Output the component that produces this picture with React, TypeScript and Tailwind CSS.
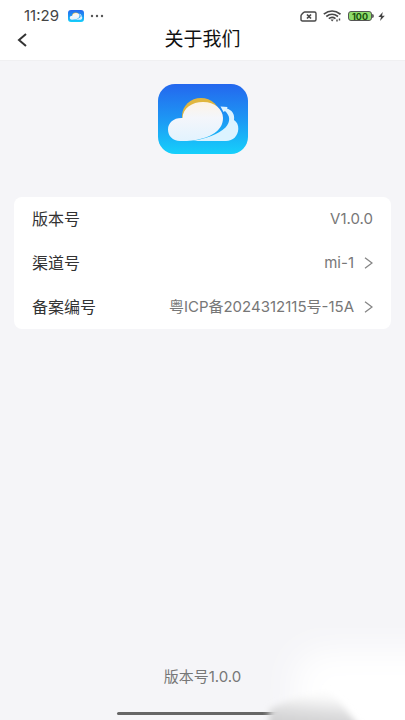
import { useId } from 'react';

interface AboutItem {
  label: string;
  value: string;
  link?: boolean;
}

const items: AboutItem[] = [
  { label: '版本号', value: 'V1.0.0' },
  { label: '渠道号', value: 'mi-1', link: true },
  { label: '备案编号', value: '粤ICP备2024312115号-15A', link: true },
];

function CloudLogo({ className }: { className: string }) {
  const id = useId();

  return (
    <svg viewBox="0 0 90 70" preserveAspectRatio="none" className={className} aria-hidden="true">
      <defs>
        <linearGradient id={`${id}sky`} x1="0" y1="0" x2="0" y2="1">
          <stop offset="0" stopColor="#2467ee" />
          <stop offset="0.5" stopColor="#1d97f4" />
          <stop offset="1" stopColor="#16d0fb" />
        </linearGradient>
        <linearGradient id={`${id}cloud`} x1="0.5" y1="0" x2="0.5" y2="1">
          <stop offset="0" stopColor="#fdf3e6" />
          <stop offset="0.4" stopColor="#f4f6fb" />
          <stop offset="1" stopColor="#e2f3fe" />
        </linearGradient>
      </defs>
      <rect width="90" height="70" rx="17" fill={`url(#${id}sky)`} />
      <ellipse cx="43" cy="32" rx="19" ry="18" fill="#e0b63f" />
      <path
        d="M62.500 22.500 L69.500 23 L69 24.500 C74 26 77 30.500 76 36 C79 38 80.5 41 80.3 45 C80 52 75 57 68 57 L35 57 C48 54.5 60 50.500 67.500 43.5 C73 37.500 72 31.500 67 27 L65.500 28 Z"
        fill="#dcf3ff"
      />
      <path
        d="M23 57 C15 57.500 10 52 10 45.500 C10 38.500 16 33.500 24.500 34 C25 24 34 18 45 18 C57 18 65 25.500 65 34 C65 46 54 52 44 54.500 C38 56.500 31 57 23 57 Z"
        fill={`url(#${id}cloud)`}
      />
    </svg>
  );
}

function StatusBar() {
  return (
    <div className="flex h-4 items-center justify-between pr-5 pl-6">
      <div className="flex items-center">
        <span className="w-9 text-[15px] leading-4 whitespace-nowrap text-[#444]">11:29</span>
        <CloudLogo className="ml-2 h-3 w-4" />
        <svg viewBox="0 0 14 4" className="ml-1.5 h-1 w-3.5" fill="#555" aria-hidden="true">
          <circle cx="2" cy="2" r="1.200" />
          <circle cx="7" cy="2" r="1.200" />
          <circle cx="12" cy="2" r="1.200" />
        </svg>
      </div>
      <div className="flex items-center">
        {/* no sim */}
        <svg viewBox="0 0 17 11" className="h-[11px] w-[17px]" fill="none" stroke="#484848" strokeWidth="1.400" aria-hidden="true">
          <path d="M4.800 1 H14.500 Q16 1 16 2.500 V8.500 Q16 10 14.500 10 H2.500 Q1 10 1 8.500 V5 Q1 4.200 1.600 3.600 L3.500 1.600 Q4 1 4.800 1 Z" />
          <path d="M7 3.500 L11 7.500 M11 3.500 L7 7.500" strokeWidth="1.700" />
        </svg>
        {/* wifi */}
        <svg viewBox="0 0 19 12" className="ml-1.5 h-3 w-[19px]" fill="none" stroke="#484848" strokeWidth="1.700" aria-hidden="true">
          <path d="M0.800 4.200 Q9 -2.200 17.500 4.200" />
          <path d="M3.300 6.500 Q9 2 15 6.500" />
          <path d="M5.800 8.600 Q9 6 12.500 8.600" />
          <path d="M7.500 9.600 H10.800 L9.200 11.500 Z" fill="#484848" stroke="none" />
          <path d="M14 9.500 V11.500 M16.500 8.500 V10.500" strokeWidth="1.400" />
        </svg>
        <div className="ml-1.5 flex h-[10px] w-6 items-center justify-center rounded-[3px] border border-[#555] bg-[#8fdc6c] text-[9px] leading-none font-bold text-[#17500b]">
          100
        </div>
        <div className="h-1 w-0.5 rounded-r-sm bg-[#666]" />
        <svg viewBox="0 0 7 9" className="ml-1 h-[9px] w-[7px]" fill="#444" aria-hidden="true">
          <path d="M4.800 0 L0.300 5 H3 L2 9 L6.800 3.800 H4 Z" />
        </svg>
      </div>
    </div>
  );
}

function ItemRow({ item }: { item: AboutItem }) {
  const content = (
    <>
      <span className="text-base text-[#333]">{item.label}</span>
      <span className="flex items-center text-[15px] text-[#777]">
        {item.value}
        {item.link && (
          <svg viewBox="0 0 9 12" className="ml-2.5 h-3 w-[9px]" fill="none" stroke="#858585" strokeWidth="1.300" aria-hidden="true">
            <path d="M1 0.800 L8 6 L1 11.200" />
          </svg>
        )}
      </span>
    </>
  );

  if (item.link) {
    return (
      <a href="#" className="flex h-11 items-center justify-between">
        {content}
      </a>
    );
  }
  return <div className="flex h-11 items-center justify-between">{content}</div>;
}

export default function App() {
  return (
    <div className="relative flex min-h-screen flex-col overflow-hidden bg-[#f5f5f8] font-['Inter','Noto_Sans_CJK_SC',sans-serif]">
      <header className="border-b border-[#f0f0f2] bg-white pt-2">
        <StatusBar />
        <div className="grid h-9 grid-cols-[1fr_auto_1fr] items-center px-4 pb-1">
          <button type="button" aria-label="返回" className="flex h-8 w-8 items-center">
            <svg viewBox="0 0 12 14" className="h-3.5 w-3" fill="none" stroke="#333" strokeWidth="2" aria-hidden="true">
              <path d="M10 1 L3 7 L10 13" />
            </svg>
          </button>
          <h1 className="text-[19px] leading-6 text-[#111]">关于我们</h1>
        </div>
      </header>

      <main className="flex flex-1 flex-col px-3.5">
        <CloudLogo className="mt-[23px] h-[70px] w-[90px] self-center" />
        <div className="mt-[43px] rounded-lg bg-white px-[18px]">
          {items.map((item) => (
            <ItemRow key={item.label} item={item} />
          ))}
        </div>
      </main>

      <footer className="flex flex-col items-center pb-[5px]">
        <p className="text-[15px] leading-5 text-[#777]">版本号1.0.0</p>
        <div className="mt-[25px] h-[3px] w-[42%] rounded-full bg-[#666]" />
      </footer>

      {/* light glow over the bottom corner */}
      <svg
        viewBox="0 0 140 92"
        preserveAspectRatio="none"
        className="pointer-events-none absolute right-0 bottom-0 h-[92px] w-[35%]"
        aria-hidden="true"
      >
        <defs>
          <linearGradient id="shade" x1="0.2" y1="1" x2="0.4" y2="0">
            <stop offset="0" stopColor="#c8c8c9" />
            <stop offset="0.5" stopColor="#dededf" />
            <stop offset="0.9" stopColor="#fafafa" />
          </linearGradient>
          <filter id="glow" filterUnits="userSpaceOnUse" x="-40" y="-40" width="300" height="240">
            <feGaussianBlur stdDeviation="16" />
          </filter>
          <filter id="soft" filterUnits="userSpaceOnUse" x="-20" y="40" width="160" height="80">
            <feGaussianBlur stdDeviation="3" />
          </filter>
        </defs>
        <path d="M32 160 V40 Q40 24 64 22 H220 V160 Z" fill="#fff" filter="url(#glow)" />
        <path d="M6 82 C18 74 36 68 60 64 C72 66 80 80 98 102 H6 Z" fill="url(#shade)" filter="url(#soft)" />
      </svg>
    </div>
  );
}
